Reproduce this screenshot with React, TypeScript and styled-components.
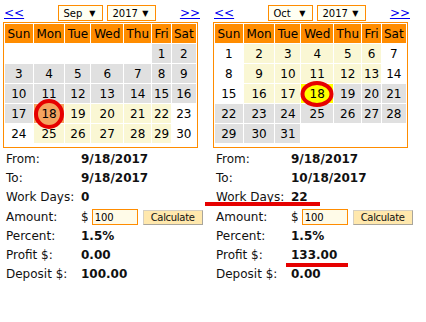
import styled, { createGlobalStyle } from 'styled-components'

const GlobalStyle = createGlobalStyle`
  body {
    margin: 0;
    background: #fff;
    font-family: 'DejaVu Sans', Verdana, sans-serif;
    color: #111;
  }
`

const ORANGE = '#ff8c00'

type Tone = 'blank' | 'grey' | 'range' | 'plain' | 'pickA' | 'pickB'

const toneBg: Record<Tone, string> = {
  blank: '#fff',
  plain: '#fff',
  grey: '#e0e0e0',
  range: '#faf7d4',
  pickA: '#f4a460',
  pickB: '#ffff00',
}

const Page = styled.div`
  position: relative;
  display: flex;
  gap: 12px;
  padding: 4px 0 0 3px;
  width: 426px;
  height: 318px;
  box-sizing: border-box;
`

const Panel = styled.div`
  width: 198px;
  display: flex;
  flex-direction: column;
`

const Nav = styled.div`
  display: flex;
  align-items: center;
  height: 18px;
  padding: 0 1px;
`

const NavLink = styled.a`
  color: #0000ee;
  font-size: 12px;
  line-height: 14px;
  text-decoration: underline;
  cursor: pointer;
`

const SelectGroup = styled.div`
  display: flex;
  gap: 4px;
  margin: 0 auto;
  padding-left: 9px;
`

const FakeSelect = styled.div<{ $w: number }>`
  width: ${p => p.$w}px;
  height: 16px;
  box-sizing: border-box;
  border: 1px solid ${ORANGE};
  background: #fffff2;
  display: flex;
  align-items: center;
  justify-content: space-between;
  padding: 0 6px 0 5px;
  font-size: 10px;
  color: #000;
`

const Arrow = styled.span`
  font-size: 8px;
`

const CalTable = styled.table`
  width: 195px;
  border: 1px solid ${ORANGE};
  border-spacing: 1px;
  padding: 0 0 3px 0;
  font-size: 12px;
  color: #000;
`

const Th = styled.th`
  background: ${ORANGE};
  font-weight: normal;
  height: 19px;
  padding: 0 1px;
`

const Td = styled.td<{ $tone: Tone }>`
  position: relative;
  background: ${p => toneBg[p.$tone]};
  height: 19px;
  padding: 0;
  text-align: center;
`

const Ring = styled.span<{ $w: number; $h: number; $fill: string }>`
  position: absolute;
  left: 50%;
  top: 50%;
  width: ${p => p.$w}px;
  height: ${p => p.$h}px;
  transform: translate(-50%, -50%);
  box-sizing: border-box;
  border: 4px solid #e60000;
  border-radius: 50%;
  background: ${p => p.$fill};
  z-index: 1;
`

const DayNum = styled.span`
  position: relative;
  z-index: 2;
`

const Info = styled.div`
  margin-top: 2px;
  padding-left: 3px;
  display: grid;
  grid-template-columns: 75px auto;
  font-size: 12px;
  line-height: 19px;
`

const Label = styled.div<{ $tall?: boolean }>`
  height: ${p => (p.$tall ? 20 : 19)}px;
  display: flex;
  align-items: center;
`

const Value = styled.div<{ $tall?: boolean }>`
  height: ${p => (p.$tall ? 20 : 19)}px;
  display: flex;
  align-items: center;
  font-weight: bold;
  white-space: nowrap;
`

const Dollar = styled.span`
  font-weight: normal;
  margin-right: 3px;
`

const AmountInput = styled.input`
  width: 46px;
  height: 16px;
  box-sizing: border-box;
  border: 1px solid ${ORANGE};
  background: #fffbe8;
  font-family: inherit;
  font-size: 10px;
  padding: 0 2px;
  outline: none;
`

const CalcButton = styled.button`
  margin-left: 5px;
  width: 60px;
  height: 15px;
  box-sizing: border-box;
  padding: 0;
  background: #ffe8ad;
  border: 1px solid #d6d0c2;
  border-right-color: #a9a59b;
  border-bottom-color: #a9a59b;
  font-family: inherit;
  font-size: 10px;
  letter-spacing: -0.3px;
  color: #111;
`

const Mark = styled.div<{ $x: number; $y: number; $w: number }>`
  position: absolute;
  left: ${p => p.$x}px;
  top: ${p => p.$y}px;
  width: ${p => p.$w}px;
  height: 4px;
  background: #e60000;
`

type Cell = { d?: number; t: Tone }

const DAYS = ['Sun', 'Mon', 'Tue', 'Wed', 'Thu', 'Fri', 'Sat']

function buildMonth(
  firstDow: number,
  count: number,
  toneOf: (d: number, dow: number) => Tone
): Cell[][] {
  const cells: Cell[] = []
  for (let i = 0; i < firstDow; i++) cells.push({ t: 'blank' })
  for (let d = 1; d <= count; d++) cells.push({ d, t: toneOf(d, (firstDow + d - 1) % 7) })
  while (cells.length % 7) cells.push({ t: 'blank' })
  const rows: Cell[][] = []
  for (let i = 0; i < cells.length; i += 7) rows.push(cells.slice(i, i + 7))
  return rows
}

const sep = buildMonth(5, 30, (d, dow) => {
  if (d < 18) return 'grey'
  if (d === 18) return 'pickA'
  return dow === 0 || dow === 6 ? 'plain' : 'range'
})

const oct = buildMonth(0, 31, (d, dow) => {
  if (d > 18) return 'grey'
  if (d === 18) return 'pickB'
  return dow === 0 || dow === 6 ? 'plain' : 'range'
})

function Calendar({ rows }: { rows: Cell[][] }) {
  return (
    <CalTable>
      <thead>
        <tr>
          {DAYS.map(d => (
            <Th key={d}>{d}</Th>
          ))}
        </tr>
      </thead>
      <tbody>
        {rows.map((r, i) => (
          <tr key={i}>
            {r.map((c, j) => (
              <Td key={j} $tone={c.t}>
                {c.t === 'pickA' && <Ring $w={30} $h={30} $fill="#f4a460" />}
                {c.t === 'pickB' && <Ring $w={33} $h={26} $fill="#ffff00" />}
                <DayNum>{c.d ?? ''}</DayNum>
              </Td>
            ))}
          </tr>
        ))}
      </tbody>
    </CalTable>
  )
}

type Summary = {
  from: string
  to: string
  work: string
  percent: string
  profit: string
  deposit: string
}

function Details({ s }: { s: Summary }) {
  return (
    <Info>
      <Label>From:</Label>
      <Value>{s.from}</Value>
      <Label>To:</Label>
      <Value>{s.to}</Value>
      <Label>Work Days:</Label>
      <Value>{s.work}</Value>
      <Label $tall>Amount:</Label>
      <Value $tall>
        <Dollar>$</Dollar>
        <AmountInput defaultValue="100" />
        <CalcButton>Calculate</CalcButton>
      </Value>
      <Label>Percent:</Label>
      <Value>{s.percent}</Value>
      <Label>Profit $:</Label>
      <Value>{s.profit}</Value>
      <Label>Deposit $:</Label>
      <Value>{s.deposit}</Value>
    </Info>
  )
}

function Picker({ month, rows, s }: { month: string; rows: Cell[][]; s: Summary }) {
  return (
    <Panel>
      <Nav>
        <NavLink>&lt;&lt;</NavLink>
        <SelectGroup>
          <FakeSelect $w={45}>
            {month} <Arrow>▼</Arrow>
          </FakeSelect>
          <FakeSelect $w={49}>
            2017 <Arrow>▼</Arrow>
          </FakeSelect>
        </SelectGroup>
        <NavLink>&gt;&gt;</NavLink>
      </Nav>
      <Calendar rows={rows} />
      <Details s={s} />
    </Panel>
  )
}

export default function App() {
  return (
    <>
      <GlobalStyle />
      <Page>
        <Picker
          month="Sep"
          rows={sep}
          s={{
            from: '9/18/2017',
            to: '9/18/2017',
            work: '0',
            percent: '1.5%',
            profit: '0.00',
            deposit: '100.00',
          }}
        />
        <Picker
          month="Oct"
          rows={oct}
          s={{
            from: '9/18/2017',
            to: '10/18/2017',
            work: '22',
            percent: '1.5%',
            profit: '133.00',
            deposit: '0.00',
          }}
        />
        <Mark $x={205} $y={202} $w={115} />
        <Mark $x={286} $y={263} $w={62} />
      </Page>
    </>
  )
}
